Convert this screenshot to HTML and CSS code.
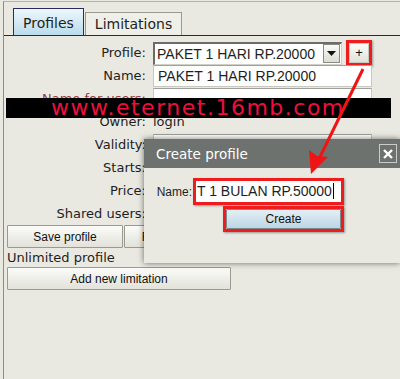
FILE: index.html
```html
<!DOCTYPE html>
<html lang="en">
<head>
    <meta charset="UTF-8">
    <title>Profiles</title>
    <link rel="stylesheet" href="styles.css">
</head>
<body>
    <div class="window">
        <div class="tabs">
            <span class="tab active">Profiles</span>
            <span class="tab">Limitations</span>
        </div>

        <div class="panel">
            <div class="form">
                <label>Profile:</label>
                <div class="field profile-row">
                    <div class="select">
                        <span class="value">PAKET 1 HARI RP.20000</span>
                        <span class="drop">
                            <svg width="9" height="5" viewBox="0 0 9 5"><path d="M0 0h9L4.5 5z" fill="#111"/></svg>
                        </span>
                    </div>
                    <span class="mark mark-plus"><button class="btn plus">+</button></span>
                </div>

                <label>Name:</label>
                <div class="field"><div class="input">PAKET 1 HARI RP.20000</div></div>

                <label class="hidden-label">Name for users:</label>
                <div class="field"><div class="input"></div></div>

                <label>Owner:</label>
                <div class="field"><span class="text">login</span></div>

                <label>Validity:</label>
                <div class="field"><div class="input">1d 00:00:00</div></div>

                <label>Starts:</label>
                <div class="field"><div class="input">logon</div></div>

                <label>Price:</label>
                <div class="field"><div class="input">20000</div></div>

                <label>Shared users:</label>
                <div class="field"><div class="input">1</div></div>
            </div>

            <div class="btn-row">
                <button class="btn">Save profile</button>
                <button class="btn">Remove profile</button>
            </div>
            <div class="note">Unlimited profile</div>
            <button class="btn wide">Add new limitation</button>
        </div>

        <div class="dialog">
            <div class="dialog-title">
                <span>Create profile</span>
                <span class="close">
                    <svg width="12" height="12" viewBox="0 0 12 12"><path d="M2 2l8 8M10 2l-8 8" stroke="#fff" stroke-width="2.4"/></svg>
                </span>
            </div>
            <div class="dialog-body">
                <div class="dialog-row">
                    <span class="dlg-label">Name:</span>
                    <span class="mark"><span class="dlg-input">T 1 BULAN RP.50000<i class="caret"></i></span></span>
                </div>
                <span class="mark mark-create"><button class="btn create">Create</button></span>
            </div>
        </div>

        <div class="watermark">www.eternet.16mb.com</div>

        <svg class="arrow" width="400" height="379" viewBox="0 0 400 379">
            <path d="M363 69L318 161" stroke="#f01414" stroke-width="3" fill="none"/>
            <path d="M311 174L309 150L317 156L328 157z" fill="#f01414"/>
        </svg>
    </div>
</body>
</html>
```

FILE: styles.css
```css
body {
    margin: 0;
    background: #e9e9e1;
    font-family: "DejaVu Sans", sans-serif;
    color: #1e1e1e;
    width: 400px;
    height: 379px;
    overflow: hidden;
}

.window {
    position: relative;
    margin: 1px 0 0 3px;
    border-top: 1px solid #b4b4ac;
    border-left: 1px solid #8c8c86;
    height: 377px;
}

/* tabs */
.tabs {
    display: flex;
    align-items: flex-end;
    padding-left: 9px;
    height: 33px;
    border-bottom: 1px solid #26265e;
}

.tab {
    font-size: 14px;
    height: 22px;
    line-height: 22px;
    padding: 0 9px;
    background: #efefe9;
    border: 1px solid #9a9a94;
    border-bottom: none;
    margin-left: 1px;
}

.tab.active {
    height: 26px;
    line-height: 28px;
    margin-left: 0;
    padding: 0 9px 0 9px;
    border-color: #2a2a66;
    background: linear-gradient(#eef7fc, #b9dcec);
}

/* form */
.panel {
    padding: 6px 0 0 3px;
}

.form {
    display: grid;
    grid-template-columns: 139px 219px;
    column-gap: 7px;
    grid-auto-rows: 22px;
    row-gap: 1px;
    font-size: 13px;
}

.form label {
    text-align: right;
    line-height: 22px;
    white-space: nowrap;
}

.hidden-label {
    color: #9a3a44;
}

.field {
    display: flex;
    align-items: center;
}

.text {
    line-height: 22px;
}

.input {
    box-sizing: border-box;
    width: 219px;
    height: 22px;
    background: #fff;
    border: 1px solid #c8c8c0;
    border-top-color: #a0a09a;
    font-family: "Liberation Sans", Arial, sans-serif;
    font-size: 14px;
    line-height: 20px;
    padding-left: 4px;
}

.profile-row {
    gap: 4px;
}

.select {
    box-sizing: border-box;
    width: 194px;
    height: 23px;
    display: flex;
    align-items: center;
    justify-content: space-between;
    background: #fff;
    border: 1px solid #d0d0c8;
    border-top: 2px solid #6c6c68;
    border-left: 2px solid #6c6c68;
    font-family: "Liberation Sans", Arial, sans-serif;
    font-size: 14px;
    padding-left: 2px;
}

.drop {
    width: 15px;
    height: 17px;
    margin-right: 1px;
    display: flex;
    align-items: center;
    justify-content: center;
    background: linear-gradient(#fafaf6, #dcdcd4);
    border: 1px solid #8a8a84;
}

.mark {
    display: inline-flex;
    border: 3px solid #ee1c1c;
    box-shadow: 1px 1px 2px rgba(0, 0, 0, 0.35);
}

.mark-plus {
    margin-top: -1px;
}

/* buttons */
.btn {
    font-family: "Liberation Sans", Arial, sans-serif;
    font-size: 12px;
    color: #111;
    background: linear-gradient(#fbfbf9, #e2e2da);
    border: 1px solid #9a9a92;
    border-radius: 1px;
    padding: 0;
    height: 23px;
}

.plus {
    width: 20px;
    height: 20px;
    font-size: 13px;
    line-height: 16px;
    border-color: #c8c8c0;
}

.btn-row {
    display: flex;
    gap: 1px;
    margin-top: 0;
}

.btn-row .btn {
    width: 116px;
}

.note {
    font-size: 13px;
    line-height: 19px;
}

.wide {
    width: 224px;
}

/* overlays */
.watermark {
    position: absolute;
    left: 2px;
    top: 96px;
    width: 385px;
    height: 20px;
    background: #000;
    color: #ee0f3e;
    font-size: 22px;
    letter-spacing: 1.5px;
    line-height: 20px;
    padding-left: 45px;
    box-sizing: border-box;
    overflow: hidden;
}

.dialog {
    position: absolute;
    left: 140px;
    top: 137px;
    width: 256px;
    height: 124px;
    background: #e9e9e1;
    box-shadow: 0 0 6px rgba(0, 0, 0, 0.55);
}

.dialog-title {
    height: 29px;
    background: #6d726f;
    color: #fff;
    font-size: 13.5px;
    display: flex;
    align-items: center;
    justify-content: space-between;
    padding: 0 3px 0 12px;
}

.close {
    width: 16px;
    height: 17px;
    display: flex;
    align-items: center;
    justify-content: center;
    border: 1px solid #c9ccca;
}

.dialog-body {
    display: flex;
    flex-direction: column;
    align-items: flex-end;
    width: 200px;
    padding-top: 10px;
}

.dialog-row {
    display: flex;
    align-items: center;
    gap: 1px;
}

.dlg-label {
    font-family: "Liberation Sans", Arial, sans-serif;
    font-size: 12px;
}

.dlg-input {
    width: 145px;
    height: 21px;
    background: #fff;
    font-family: "Liberation Sans", Arial, sans-serif;
    font-size: 14px;
    line-height: 21px;
    padding-left: 1px;
    white-space: nowrap;
    box-sizing: border-box;
}

.caret {
    display: inline-block;
    width: 1px;
    height: 16px;
    background: #000;
    vertical-align: -3px;
    margin-left: 1px;
}

.mark-create {
    margin-top: 1px;
}

.create {
    width: 115px;
    height: 20px;
    background: linear-gradient(#e4eff5, #bcd6e4);
    border-color: #7e8a90;
}

.arrow {
    position: absolute;
    left: -4px;
    top: -2px;
    pointer-events: none;
}
```
